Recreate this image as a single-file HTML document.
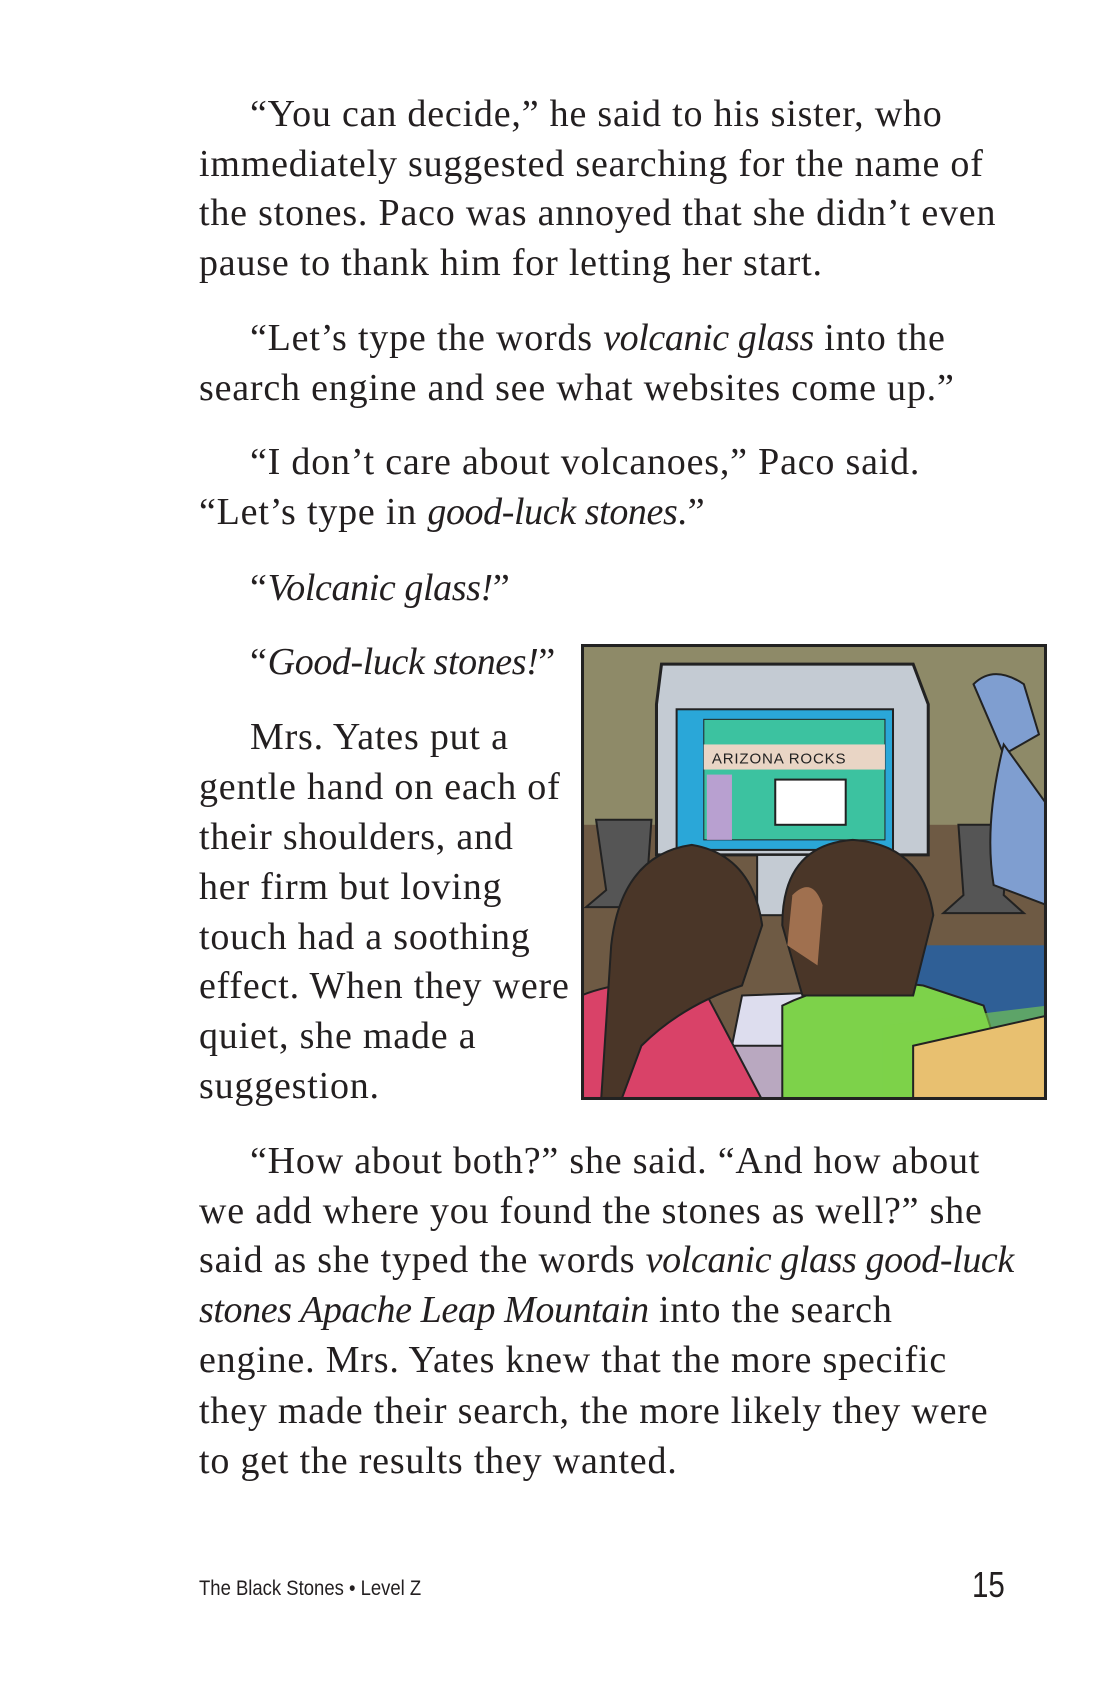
<!DOCTYPE html>
<html><head><meta charset="utf-8"><style>
body{margin:0;background:#fff;}
#p{position:relative;width:1100px;height:1700px;overflow:hidden;background:#fff;font-family:"Liberation Serif",serif;color:#231f20;font-size:38px;letter-spacing:0.8px;}
.l{position:absolute;white-space:nowrap;line-height:50px;}
i{font-style:italic;letter-spacing:-0.4px;}
.f{position:absolute;font-family:"Liberation Sans",sans-serif;letter-spacing:0;}
</style></head><body><div id="p">
<div class="l" style="left:250px;top:89px">“You can decide,” he said to his sister, who</div>
<div class="l" style="left:199px;top:139px">immediately suggested searching for the name of</div>
<div class="l" style="left:199px;top:188px">the stones. Paco was annoyed that she didn’t even</div>
<div class="l" style="left:199px;top:238px">pause to thank him for letting her start.</div>
<div class="l" style="left:250px;top:313px">“Let’s type the words <i>volcanic glass</i> into the</div>
<div class="l" style="left:199px;top:363px">search engine and see what websites come up.”</div>
<div class="l" style="left:250px;top:437px">“I don’t care about volcanoes,” Paco said.</div>
<div class="l" style="left:199px;top:487px">“Let’s type in <i>good-luck stones</i>.”</div>
<div class="l" style="left:250px;top:563px">“<i>Volcanic glass!</i>”</div>
<div class="l" style="left:250px;top:637px">“<i>Good-luck stones!</i>”</div>
<div class="l" style="left:250px;top:712px">Mrs. Yates put a</div>
<div class="l" style="left:199px;top:762px">gentle hand on each of</div>
<div class="l" style="left:199px;top:812px">their shoulders, and</div>
<div class="l" style="left:199px;top:862px">her firm but loving</div>
<div class="l" style="left:199px;top:912px">touch had a soothing</div>
<div class="l" style="left:199px;top:961px">effect. When they were</div>
<div class="l" style="left:199px;top:1011px">quiet, she made a</div>
<div class="l" style="left:199px;top:1061px">suggestion.</div>
<div class="l" style="left:250px;top:1136px">“How about both?” she said. “And how about</div>
<div class="l" style="left:199px;top:1186px">we add where you found the stones as well?” she</div>
<div class="l" style="left:199px;top:1235px">said as she typed the words <i>volcanic glass good-luck</i></div>
<div class="l" style="left:199px;top:1285px"><i>stones Apache Leap Mountain</i> into the search</div>
<div class="l" style="left:199px;top:1335px">engine. Mrs. Yates knew that the more specific</div>
<div class="l" style="left:199px;top:1386px">they made their search, the more likely they were</div>
<div class="l" style="left:199px;top:1436px">to get the results they wanted.</div>
<div class="f" style="left:199px;top:1577px;font-size:21px;transform:scaleX(0.88);transform-origin:left">The Black Stones • Level Z</div>
<div class="f" style="left:972px;top:1564px;font-size:36px;transform:scaleX(0.82);transform-origin:left">15</div>
<svg style="position:absolute;left:581px;top:644px" width="466" height="456" viewBox="0 0 463 454" preserveAspectRatio="none">
<rect x="0" y="0" width="463" height="454" fill="#8e8a68"/>
<rect x="0" y="180" width="463" height="274" fill="#6e5a44"/>
<rect x="0" y="400" width="463" height="54" fill="#b9a8c0"/>
<path d="M80 20 L330 20 L345 60 L345 210 L75 210 L75 60 Z" fill="#c4cbd3" stroke="#222" stroke-width="3"/>
<rect x="95" y="65" width="215" height="140" fill="#2aa7d8" stroke="#222" stroke-width="2"/>
<rect x="122" y="75" width="180" height="120" fill="#3cc2a0" stroke="#222"/>
<rect x="122" y="100" width="180" height="25" fill="#e9d5c5"/>
<text x="130" y="119" font-family="Liberation Sans,sans-serif" font-size="15" fill="#222">ARIZONA ROCKS</text>
<rect x="193" y="135" width="70" height="45" fill="#fff" stroke="#222" stroke-width="2"/>
<rect x="125" y="130" width="25" height="65" fill="#b8a0d0"/>
<rect x="175" y="210" width="55" height="60" fill="#c4cbd3" stroke="#222" stroke-width="2"/>
<path d="M15 175 L70 175 L65 245 L85 262 L5 262 L25 245 Z" fill="#555" stroke="#222" stroke-width="2"/>
<path d="M375 180 L425 180 L420 250 L440 268 L360 268 L380 250 Z" fill="#555" stroke="#222" stroke-width="2"/>
<path d="M390 40 Q410 20 440 40 L455 90 L420 110 Z" fill="#7f9ed0" stroke="#222" stroke-width="2"/>
<path d="M420 100 Q400 180 410 240 L463 260 L463 160 Z" fill="#7f9ed0" stroke="#222" stroke-width="2"/>
<rect x="330" y="300" width="133" height="100" fill="#2f5f96"/>
<path d="M160 350 L290 345 L300 400 L150 400 Z" fill="#dde" stroke="#222" stroke-width="2"/>
<path d="M0 350 Q50 330 120 340 L180 454 L0 454 Z" fill="#d94268" stroke="#222" stroke-width="2"/>
<path d="M30 300 Q40 210 110 200 Q170 210 180 280 L160 340 Q100 360 60 400 L40 454 L20 454 Z" fill="#4a3628" stroke="#222" stroke-width="2"/>
<path d="M200 360 Q260 330 340 340 L400 360 L430 454 L200 454 Z" fill="#7dd24a" stroke="#222" stroke-width="2"/>
<path d="M200 280 Q200 200 270 195 Q340 200 350 270 L330 350 L220 350 Z" fill="#4a3628" stroke="#222" stroke-width="2"/>
<path d="M210 250 Q230 230 240 260 L235 320 L205 300 Z" fill="#a0704f"/>
<path d="M300 380 L463 360 L463 454 L300 454 Z" fill="#7dd24a" opacity="0.6"/>
<path d="M330 400 L463 370 L463 454 L330 454 Z" fill="#e8c070" stroke="#222" stroke-width="2"/>
<rect x="1.5" y="1.5" width="460" height="451" fill="none" stroke="#222" stroke-width="3"/>
</svg>
</div></body></html>
